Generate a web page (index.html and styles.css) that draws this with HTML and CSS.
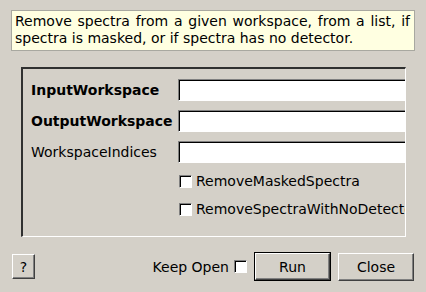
FILE: index.html
```html
<!DOCTYPE html>
<html>
<head>
<meta charset="utf-8">
<link rel="stylesheet" href="styles.css">
</head>
<body>
<div class="dialog">
  <div class="tip">Remove spectra from a given workspace, from a list, if spectra is masked, or if spectra has no detector.</div>
  <div class="group">
    <div class="grid">
      <div class="label bold">InputWorkspace</div>
      <div class="field"><div class="input"></div></div>
      <div class="label bold">OutputWorkspace</div>
      <div class="field"><div class="input"></div></div>
      <div class="label">WorkspaceIndices</div>
      <div class="field"><div class="input"></div></div>
    </div>
    <div class="checks">
      <div class="check"><span class="box"></span><span class="ctext">RemoveMaskedSpectra</span></div>
      <div class="check"><span class="box"></span><span class="ctext">RemoveSpectraWithNoDetector</span></div>
    </div>
  </div>
  <div class="footer">
    <div class="btn help">?</div>
    <div class="spacer"></div>
    <div class="keep"><span class="ktext">Keep Open</span><span class="box"></span></div>
    <div class="default"><div class="btn run">Run</div></div>
    <div class="btn close">Close</div>
  </div>
</div>
</body>
</html>
```

FILE: styles.css
```css
html, body {
  margin: 0;
  padding: 0;
  background: #d4d0c8;
}
body {
  width: 426px;
  height: 292px;
  overflow: hidden;
  font-family: "DejaVu Sans", sans-serif;
  font-size: 14px;
  color: #000;
}
.dialog {
  display: flex;
  flex-direction: column;
  width: 426px;
  height: 292px;
}
.tip {
  box-sizing: border-box;
  margin: 10px 11px 0 11px;
  width: 404px;
  height: 41px;
  background: #ffffe1;
  border: 1px solid #a8a8a0;
  padding: 2px 4px 0 3px;
  line-height: 17px;
  text-align: justify;
}
.group {
  box-sizing: border-box;
  margin: 16px 0 0 21px;
  width: 385px;
  height: 170px;
  border-style: solid;
  border-width: 2px 1px 1px 2px;
  border-color: #303030 #ffffff #ffffff #303030;
  overflow: hidden;
  padding: 10px 0 0 8px;
}
.grid {
  display: grid;
  grid-template-columns: 147px 240px;
  row-gap: 9px;
}
.label {
  height: 22px;
  line-height: 22px;
  white-space: nowrap;
}
.bold { font-weight: bold; }
.input {
  box-sizing: border-box;
  height: 22px;
  width: 240px;
  background: #fff;
  border-style: solid;
  border-width: 1px;
  border-color: #808080 #fff #fff #808080;
  box-shadow: inset 1px 1px 0 #000;
}
.checks {
  display: flex;
  flex-direction: column;
  gap: 10px;
  margin-top: 9px;
  padding-left: 148px;
}
.check {
  display: flex;
  align-items: center;
  gap: 4px;
  height: 18px;
  white-space: nowrap;
}
.box {
  box-sizing: border-box;
  flex: none;
  width: 13px;
  height: 13px;
  background: #fff;
  border-style: solid;
  border-width: 1px;
  border-color: #808080 #fff #fff #808080;
  box-shadow: inset 1px 1px 0 #000;
}
.footer {
  display: flex;
  align-items: center;
  margin-top: 15px;
  padding: 0 12px;
  height: 29px;
}
.spacer { flex: 1; }
.btn {
  box-sizing: border-box;
  display: flex;
  align-items: center;
  justify-content: center;
  border-style: solid;
  border-width: 1px;
  border-color: #fff #404040 #404040 #fff;
  box-shadow: inset -1px -1px 0 #808080;
}
.help {
  width: 23px;
  height: 25px;
}
.keep {
  display: flex;
  align-items: center;
  gap: 5px;
  margin-right: 7px;
}
.default {
  box-sizing: border-box;
  border: 1px solid #000;
  width: 77px;
  height: 29px;
  display: flex;
}
.run {
  flex: 1;
}
.close {
  margin-left: 7px;
  width: 76px;
  height: 28px;
}
```
